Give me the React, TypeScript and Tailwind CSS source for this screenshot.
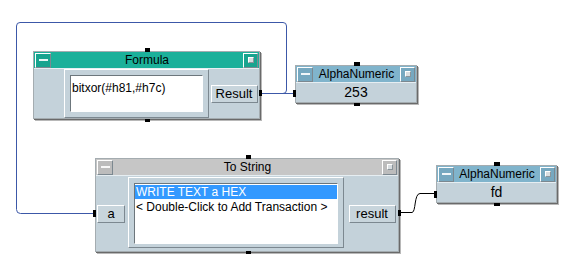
import type { ReactNode } from "react";

// Agilent VEE style program canvas
const raised = "border border-t-white border-l-white border-r-[#7c8890] border-b-[#7c8890]";
const sunken = "border border-t-[#6c767c] border-l-[#6c767c] border-r-white border-b-white";

function MinBtn({ tone }: { tone: string }) {
  return (
    <div className={`w-[16px] h-[15px] flex items-center justify-center ${raised} ${tone}`}>
      <div className="w-[9px] h-[2px] bg-white/90" />
    </div>
  );
}

function MaxBtn({ tone }: { tone: string }) {
  return (
    <div className={`w-[15px] h-[15px] flex items-center justify-center ${raised} ${tone}`}>
      <div className="w-[6px] h-[6px] bg-[#d8dde0] border-t border-l border-white border-r border-b border-r-[#8a949a] border-b-[#8a949a]" />
    </div>
  );
}

function Pin({ className }: { className: string }) {
  return <div className={`absolute bg-black ${className}`} />;
}

function VeeNode({
  x,
  y,
  w,
  h,
  title,
  bar,
  btn,
  children,
  pins,
}: {
  x: string;
  y: string;
  w: string;
  h: string;
  title: string;
  bar: string;
  btn: string;
  children: ReactNode;
  pins: ReactNode;
}) {
  return (
    <div className={`absolute ${x} ${y} ${w} ${h} flex flex-col border border-[#a4acb0] shadow-[1px_1px_0_#6a6a6a,2px_2px_0_#b8b8b8] bg-[#c4d2da]`}>
      <div className={`h-[17px] flex items-center px-[1px] gap-[1px] ${bar} border-b border-b-[#e6eef2]`}>
        <MinBtn tone={btn} />
        <div className="flex-1 text-center text-[12px] leading-[15px] text-black">{title}</div>
        <MaxBtn tone={btn} />
      </div>
      <div className="flex-1 flex">{children}</div>
      {pins}
    </div>
  );
}

function PinButton({ label, w }: { label: string; w: string }) {
  return (
    <div className={`${w} h-[18px] flex items-center justify-center text-[13px] leading-none text-black bg-[#c8d5dc] ${raised}`}>
      {label}
    </div>
  );
}

export default function App() {
  return (
    <div className="relative w-[582px] h-[271px] bg-white overflow-hidden font-['Liberation_Sans',Arial,sans-serif]">
      <svg className="absolute inset-0" width="582" height="271" fill="none">
        <path d="M262 93.5 H293" stroke="#3c58a8" strokeWidth="1" />
        <path
          d="M283 93.5 Q286.5 93.5 286.5 90 V26 Q286.5 22.5 283 22.5 H20 Q16.5 22.5 16.5 26 V209.5 Q16.5 213.5 20.5 213.5 H94"
          stroke="#3c58a8"
          strokeWidth="1"
        />
        <path d="M400 212.5 H412 C416 212.5 414 193.5 420 193.5 H434" stroke="#000" strokeWidth="1" />
      </svg>

      {/* Formula */}
      <VeeNode
        x="left-[33px]"
        y="top-[51px]"
        w="w-[227px]"
        h="h-[68px]"
        title="Formula"
        bar="bg-[#1bb09a]"
        btn="bg-[#18a48f]"
        pins={
          <>
            <Pin className="left-[111px] -top-[4px] w-[5px] h-[4px]" />
            <Pin className="left-[111px] -bottom-[4px] w-[5px] h-[3px]" />
            <Pin className="-right-[3px] top-[38px] w-[3px] h-[6px]" />
          </>
        }
      >
        <div className="w-[30px]" />
        <div className={`w-[145px] h-[49px] p-[5px] bg-[#c4d2da] ${raised}`}>
          <div className={`h-full bg-white px-[1px] pt-[5px] text-[12px] leading-[14px] text-black ${sunken}`}>
            bitxor(#h81,#h7c)
          </div>
        </div>
        <div className="flex-1 flex items-center justify-center">
          <PinButton label="Result" w="w-[47px]" />
        </div>
      </VeeNode>

      {/* AlphaNumeric 253 */}
      <VeeNode
        x="left-[295px]"
        y="top-[65px]"
        w="w-[122px]"
        h="h-[38px]"
        title="AlphaNumeric"
        bar="bg-[#80b4cc]"
        btn="bg-[#76a8c0]"
        pins={
          <>
            <Pin className="left-[58px] -top-[4px] w-[6px] h-[4px]" />
            <Pin className="left-[58px] -bottom-[4px] w-[6px] h-[3px]" />
            <Pin className="-left-[3px] top-[24px] w-[3px] h-[7px]" />
          </>
        }
      >
        <div className="flex-1 text-center text-[14px] leading-[19px] text-black">253</div>
      </VeeNode>

      {/* To String */}
      <VeeNode
        x="left-[95px]"
        y="top-[158px]"
        w="w-[304px]"
        h="h-[94px]"
        title="To String"
        bar="bg-[#c6c6c6]"
        btn="bg-[#bcbcbc]"
        pins={
          <>
            <Pin className="left-[150px] -top-[4px] w-[5px] h-[4px]" />
            <Pin className="left-[150px] -bottom-[3px] w-[5px] h-[3px]" />
            <Pin className="-left-[3px] top-[51px] w-[3px] h-[7px]" />
            <Pin className="-right-[3px] top-[51px] w-[3px] h-[6px]" />
          </>
        }
      >
        <div className="w-[32px] flex items-center pl-[1px]">
          <PinButton label="a" w="w-[28px]" />
        </div>
        <div className={`w-[216px] h-[71px] mt-[1px] px-[5px] pt-[5px] pb-[3px] bg-[#c4d2da] ${raised}`}>
          <div className={`h-full bg-white pt-[1px] text-[12px] leading-[14px] ${sunken}`}>
            <div className="bg-[#3399ff] text-white px-[1px]">WRITE TEXT a HEX</div>
            <div className="text-black px-[1px] pt-[1px]">&lt; Double-Click to Add Transaction &gt;</div>
          </div>
        </div>
        <div className="flex-1 flex items-center justify-center pl-[2px]">
          <PinButton label="result" w="w-[47px]" />
        </div>
      </VeeNode>

      {/* AlphaNumeric fd */}
      <VeeNode
        x="left-[436px]"
        y="top-[165px]"
        w="w-[121px]"
        h="h-[38px]"
        title="AlphaNumeric"
        bar="bg-[#80b4cc]"
        btn="bg-[#76a8c0]"
        pins={
          <>
            <Pin className="left-[57px] -top-[4px] w-[6px] h-[4px]" />
            <Pin className="left-[57px] -bottom-[4px] w-[6px] h-[3px]" />
            <Pin className="-left-[3px] top-[25px] w-[3px] h-[7px]" />
          </>
        }
      >
        <div className="flex-1 text-center text-[14px] leading-[19px] text-black">fd</div>
      </VeeNode>
    </div>
  );
}
